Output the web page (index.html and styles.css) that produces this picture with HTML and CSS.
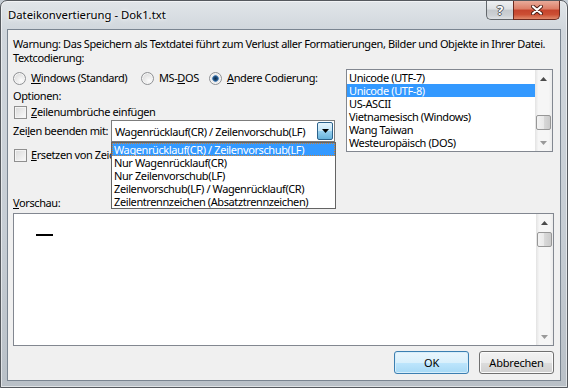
FILE: index.html
```html
<!DOCTYPE html>
<html lang="de">
<head>
    <meta charset="UTF-8">
    <title>Dateikonvertierung - Dok1.txt</title>
    <link rel="stylesheet" href="styles.css">
</head>
<body>
    <div class="window">
        <div class="titlebar">
            <span class="title">Dateikonvertierung - Dok1.txt</span>
            <div class="caption-buttons">
                <div class="cap-btn help">?</div>
                <div class="cap-btn close">
                    <svg width="12" height="10" viewBox="0 0 12 10">
                        <path d="M2 1.5 L10 8.5 M10 1.5 L2 8.5" stroke="#4a1d14" stroke-width="4" stroke-linecap="round"/>
                        <path d="M2 1.5 L10 8.5 M10 1.5 L2 8.5" stroke="#ffffff" stroke-width="2.2" stroke-linecap="round"/>
                    </svg>
                </div>
            </div>
        </div>

        <div class="client">
            <p class="line">Warnung: Das Speichern als Textdatei führt zum Verlust aller Formatierungen, Bilder und Objekte in Ihrer Datei.</p>

            <div class="top">
                <div class="left">
                    <p class="line">Textcodierung:</p>
                    <div class="radios">
                        <div class="radio r-win"><span class="dot"></span><u>W</u>indows (Standard)</div>
                        <div class="radio r-dos"><span class="dot"></span>MS-<u>D</u>OS</div>
                        <div class="radio"><span class="dot checked"></span><u>A</u>ndere Codierung:</div>
                    </div>
                    <p class="line options">Optionen:</p>
                    <div class="check first"><span class="box"></span><span><u>Z</u>eilenumbrüche einfügen</span></div>
                    <div class="combo-row">
                        <span class="combo-label">Zei<u>l</u>en beenden mit:</span>
                        <div class="combo">
                            <span class="combo-text">Wagenrücklauf(CR) / Zeilenvorschub(LF)</span>
                            <span class="combo-btn">
                                <svg width="7" height="4" viewBox="0 0 7 4"><path d="M0 0 H7 L3.5 4 Z" fill="#000"/></svg>
                            </span>
                            <ul class="dropdown">
                                <li class="selected">Wagenrücklauf(CR) / Zeilenvorschub(LF)</li>
                                <li>Nur Wagenrücklauf(CR)</li>
                                <li>Nur Zeilenvorschub(LF)</li>
                                <li>Zeilenvorschub(LF) / Wagenrücklauf(CR)</li>
                                <li>Zeilentrennzeichen (Absatztrennzeichen)</li>
                            </ul>
                        </div>
                    </div>
                    <div class="check second"><span class="box"></span><span class="covered"><u>E</u>rsetzen von Zeichen zulassen</span></div>
                </div>

                <div class="listbox">
                    <ul class="items">
                        <li>Unicode (UTF-7)</li>
                        <li class="selected">Unicode (UTF-8)</li>
                        <li>US-ASCII</li>
                        <li>Vietnamesisch (Windows)</li>
                        <li>Wang Taiwan</li>
                        <li>Westeuropäisch (DOS)</li>
                    </ul>
                    <div class="vscroll">
                        <span class="arrow"><svg width="7" height="4" viewBox="0 0 7 4"><path d="M0 4 H7 L3.5 0 Z" fill="#4b4b4b"/></svg></span>
                        <div class="track"><span class="thumb list-thumb"></span></div>
                        <span class="arrow"><svg width="7" height="4" viewBox="0 0 7 4"><path d="M0 0 H7 L3.5 4 Z" fill="#9a9a9a"/></svg></span>
                    </div>
                </div>
            </div>

            <p class="line preview-label"><u>V</u>orschau:</p>
            <div class="preview">
                <div class="preview-body"><span class="dash"></span></div>
                <div class="vscroll">
                    <span class="arrow"><svg width="7" height="4" viewBox="0 0 7 4"><path d="M0 4 H7 L3.5 0 Z" fill="#4b4b4b"/></svg></span>
                    <div class="track"><span class="thumb preview-thumb"></span></div>
                    <span class="arrow"><svg width="7" height="4" viewBox="0 0 7 4"><path d="M0 0 H7 L3.5 4 Z" fill="#9a9a9a"/></svg></span>
                </div>
            </div>

            <div class="buttons">
                <button class="btn default">OK</button>
                <button class="btn">Abbrechen</button>
            </div>
        </div>
    </div>
</body>
</html>
```

FILE: styles.css
```css
* {
    margin: 0;
    padding: 0;
    box-sizing: border-box;
}

body {
    width: 568px;
    height: 388px;
    overflow: hidden;
    background: #c4ccd4;
    font-family: "Noto Sans", sans-serif;
    font-size: 11px;
    letter-spacing: -0.4px;
    color: #000;
}

ul {
    list-style: none;
}

/* window frame */
.window {
    width: 568px;
    height: 388px;
    display: flex;
    flex-direction: column;
    padding: 0 6px 6px;
    border: 1px solid #55595e;
    border-radius: 7px 7px 0 0;
    background: linear-gradient(to bottom, #e1e5e9 0%, #d0d6dc 30px, #c6cdd4 60%, #b9c0c7 100%);
    box-shadow: inset 0 0 0 1px rgba(255, 255, 255, 0.55);
}

.titlebar {
    height: 28px;
    display: flex;
    justify-content: space-between;
    align-items: flex-start;
}

.title {
    padding: 7px 0 0 1px;
    line-height: 14px;
    font-size: 11.3px;
    letter-spacing: 0;
    text-shadow: 0 0 6px #fff, 0 0 3px #fff;
}

.caption-buttons {
    display: flex;
    margin-right: 1px;
}

.cap-btn {
    height: 19px;
    display: flex;
    align-items: center;
    justify-content: center;
    border: 1px solid #62676c;
    border-top: none;
}

.help {
    width: 27px;
    border-right: none;
    border-radius: 0 0 0 5px;
    background: linear-gradient(to bottom, #eef0f2 0%, #dde0e3 45%, #c5c9cd 50%, #cdd1d5 80%, #dfe2e5 100%);
    color: #fff;
    font-weight: bold;
    font-size: 13px;
    letter-spacing: 0;
    text-shadow: -1px 0 #5a5f64, 1px 0 #5a5f64, 0 -1px #5a5f64, 0 1px #5a5f64;
}

.close {
    width: 47px;
    border-color: #6d2a1f;
    border-radius: 0 0 5px 0;
    background: linear-gradient(to bottom, #e9ab9a 0%, #dc7d66 45%, #c5432c 50%, #cc4f34 75%, #e0896b 100%);
}

/* client area */
.client {
    flex: 1;
    display: flex;
    flex-direction: column;
    padding: 7px 6px 0 5px;
    background: #f0f0f0;
    border: 1px solid #7a8591;
}

.line {
    height: 14px;
    line-height: 14px;
    white-space: nowrap;
}

.top {
    display: flex;
}

.left {
    flex: 1;
}

.radios {
    display: flex;
    height: 14px;
    margin-top: 6px;
}

.radio {
    display: flex;
    align-items: center;
    line-height: 14px;
    white-space: nowrap;
}

.r-win {
    width: 128px;
}

.r-dos {
    width: 68px;
}

.dot {
    width: 13px;
    height: 13px;
    margin-right: 5px;
    border: 1px solid #8f9194;
    border-radius: 50%;
    background: radial-gradient(circle at 65% 70%, #fcfcfc 0%, #e9e9e9 45%, #d3d3d3 100%);
    box-shadow: inset 0 0 0 1px #f6f6f6;
}

.dot.checked {
    background: radial-gradient(circle at 50% 50%, #0f2c4a 0, #1e4d7a 2px, #5b8ec2 3px, #e6e6e6 3.6px, #f7f7f7 100%);
}

.options {
    margin-top: 4px;
}

.check {
    display: flex;
    align-items: center;
    height: 14px;
    line-height: 14px;
    padding-left: 1px;
    white-space: nowrap;
}

.check.first {
    margin-top: 2px;
}

.check.second {
    margin-top: 6px;
}

/* the open drop-down hides the rest of this label */
.covered {
    width: 80px;
    overflow: hidden;
}

.box {
    width: 13px;
    height: 13px;
    margin-right: 4px;
    border: 1px solid #8f8f8f;
    background: linear-gradient(135deg, #d9d9d9 0%, #ededed 60%, #fbfbfb 100%);
    box-shadow: inset 0 0 0 1px #f4f4f4;
}

.combo-row {
    display: flex;
    align-items: center;
    height: 22px;
    margin-top: 1px;
}

.combo-label {
    width: 98px;
    white-space: nowrap;
    line-height: 14px;
}

.combo {
    position: relative;
    width: 224px;
    height: 22px;
    display: flex;
    align-items: center;
    justify-content: space-between;
    background: #fff;
    border: 1px solid #7c7c7c;
}

.combo-text {
    padding-left: 3px;
    white-space: nowrap;
}

.combo-btn {
    width: 16px;
    height: 18px;
    margin-right: 1px;
    display: flex;
    align-items: center;
    justify-content: center;
    border: 1px solid #2c628b;
    border-radius: 2px;
    background: linear-gradient(to bottom, #e5f4fc 0%, #c4e5f6 50%, #98d1ef 50%, #68b3db 100%);
}

/* open drop-down list */
.dropdown {
    position: absolute;
    top: 21px;
    left: -1px;
    width: 225px;
    z-index: 5;
    background: #fff;
    border: 1px solid #646464;
}

.dropdown li {
    height: 13px;
    line-height: 13px;
    padding-left: 2px;
    white-space: nowrap;
}

.dropdown li.selected,
.listbox li.selected {
    background: #3399ff;
    color: #fff;
}

.dropdown li.selected {
    outline: 1px dotted #c9823a;
    outline-offset: -1px;
}

/* encoding list */
.listbox {
    width: 207px;
    height: 83px;
    margin-top: 18px;
    margin-right: 1px;
    display: flex;
    background: #fff;
    border: 1px solid #828790;
}

.items {
    flex: 1;
    padding-top: 1px;
}

.items li {
    height: 13px;
    line-height: 13px;
    padding-left: 2px;
    white-space: nowrap;
}

.vscroll {
    width: 17px;
    display: flex;
    flex-direction: column;
    background: linear-gradient(to right, #e3e3e3 0%, #f6f6f6 20%, #f6f6f6 80%, #ebebeb 100%);
}

.arrow {
    height: 17px;
    display: flex;
    align-items: center;
    justify-content: center;
}

.track {
    flex: 1;
    position: relative;
}

.thumb {
    position: absolute;
    left: 1px;
    width: 15px;
    height: 15px;
    border: 1px solid #979797;
    border-radius: 2px;
    background: linear-gradient(to right, #f3f3f3 0%, #e9e9e9 50%, #d9d9d9 50%, #cbcbcb 100%);
}

.list-thumb {
    top: 28px;
}

.preview-thumb {
    top: 1px;
}

.preview-label {
    margin-top: 34px;
}

.preview {
    height: 133px;
    margin-top: 3px;
    display: flex;
    background: #fff;
    border: 1px solid #828790;
}

.preview-body {
    flex: 1;
    padding: 20px 0 0 22px;
}

.dash {
    display: block;
    width: 17px;
    height: 2px;
    background: #000;
}

.buttons {
    display: flex;
    justify-content: flex-end;
    gap: 10px;
    margin-top: 5px;
}

.btn {
    width: 75px;
    height: 23px;
    font-family: "Noto Sans", sans-serif;
    font-size: 11px;
    letter-spacing: -0.2px;
    color: #000;
    border: 1px solid #707070;
    border-radius: 3px;
    background: linear-gradient(to bottom, #f2f2f2 0%, #ebebeb 50%, #dddddd 50%, #cfcfcf 100%);
    box-shadow: inset 0 0 0 1px #fbfbfb;
}

.btn.default {
    border-color: #3c7fb1;
    background: linear-gradient(to bottom, #eaf6fd 0%, #d9f0fc 50%, #bee6fd 50%, #a7d9f5 100%);
    box-shadow: inset 0 0 0 1px #d6eefb;
}
```
